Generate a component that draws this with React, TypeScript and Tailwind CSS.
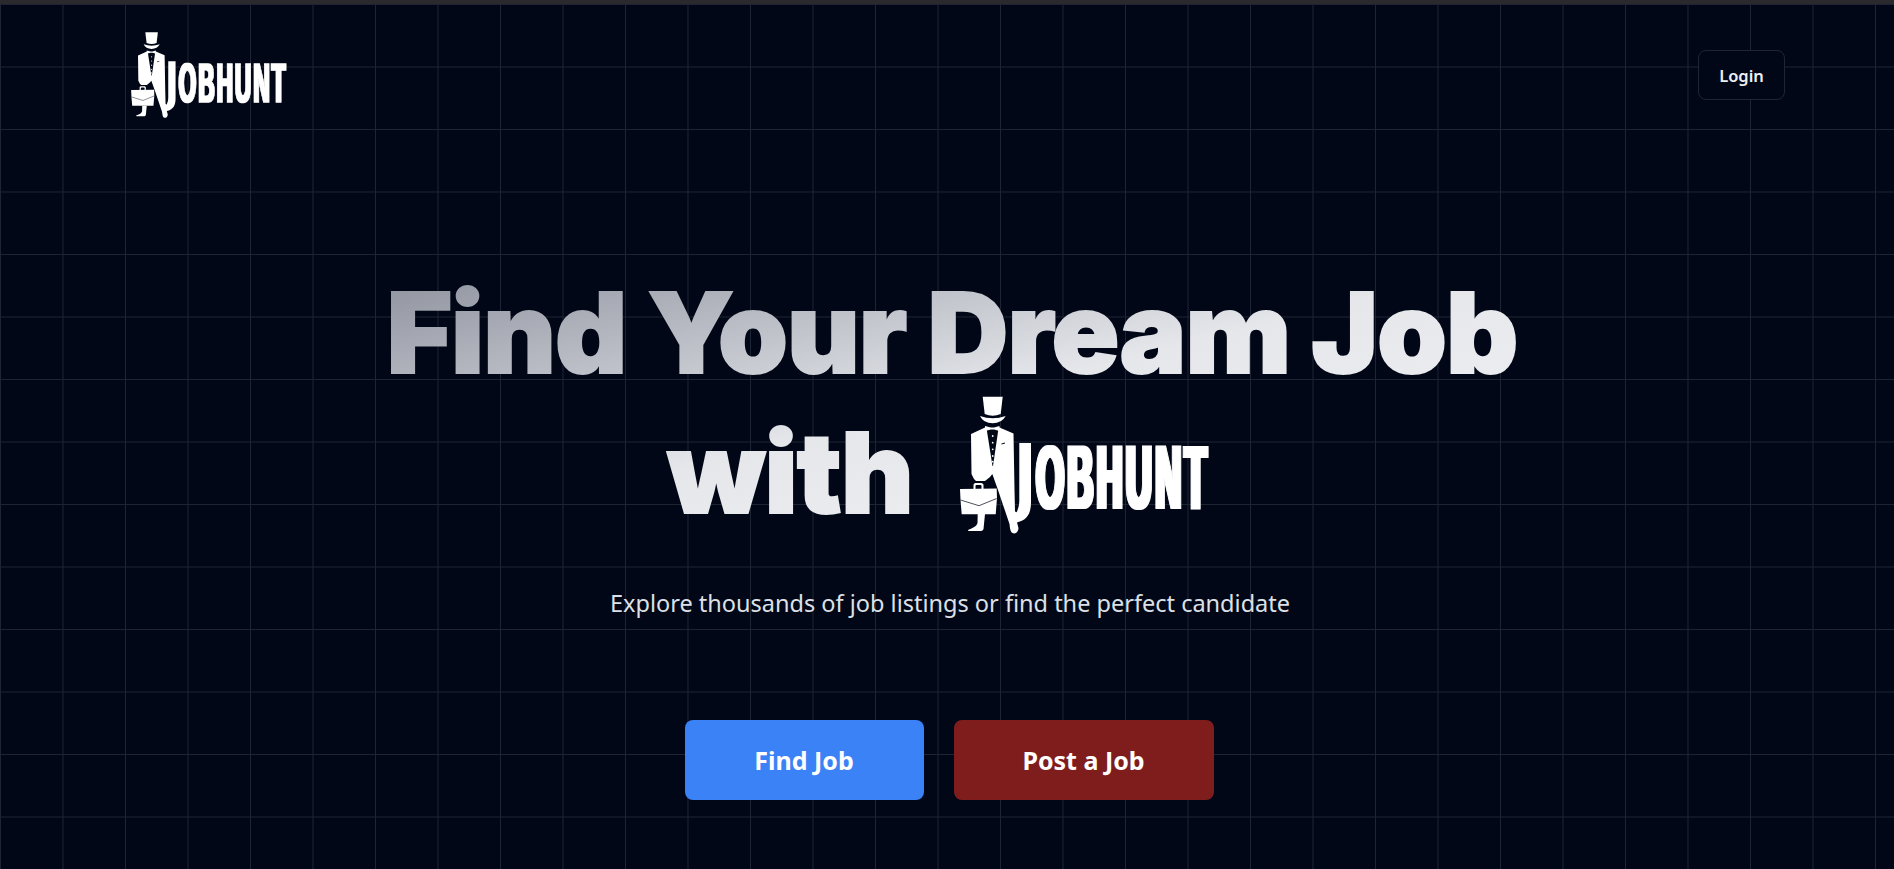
const Logo = ({ className }: { className: string }) => (
  <svg viewBox="0 0 262 150" className={className}>
    <defs>
      {/* the wordmark has much heavier stems than a squeezed bold face */}
      <filter id="logo-stems" x="-5%" y="-5%" width="110%" height="110%">
        <feMorphology operator="dilate" radius="2 0" />
      </filter>
    </defs>
    {/* hat */}
    <path fill="#fff" d="M27.7 6.7H47.7L45.7 24Q37.7 27.3 29.7 24Z" />
    <path fill="#fff" d="M25 26Q37.7 30.7 50.7 26 46.7 33.3 37.7 33.3 28.3 33.3 25 26Z" />
    {/* jacket, trouser leg and the tail of the J */}
    <path
      fill="#fff"
      d="M16 44 30 37.5H44.5L58.5 43.5 59.5 100 60 121C61 123 62 122.5 62.5 120 64 117 64.3 113 64.3 110V53H76V112C76 124 72 130 62 132.5L63.5 138C63.5 142 60 144.5 57.5 143 55.5 142 55 139 54.5 134L43 100 37.3 84 35 87 30 91H21L19 89 16.5 84Z"
    />
    {/* vest */}
    <path fill="#010717" d="M31 35H44L38 76H37.5Z" />
    <circle cx="37.7" cy="46" r="0.9" fill="#fff" />
    <circle cx="37.7" cy="52.7" r="0.9" fill="#fff" />
    <circle cx="37.7" cy="59.3" r="0.9" fill="#fff" />
    <circle cx="37.7" cy="66" r="0.9" fill="#fff" />
    <circle cx="37.7" cy="71.7" r="0.9" fill="#fff" />
    {/* bow tie */}
    <path fill="#fff" d="M30 36 36 37.5H39L44.5 36V41L39 39.5H36L30 41Z" />
    {/* breast pocket */}
    <path fill="#010717" d="M46.5 53.5 50 52.5V53.6L46.5 54.5Z" />
    {/* briefcase */}
    <path fill="#fff" d="M18.5 99V95C18.5 93.5 20 93 21 93H26C27.5 93 28.5 94 28.5 95V99H26.5V96C26.5 95.5 26 95 25.5 95H21.5C21 95 20.5 95.5 20.5 96V99Z" />
    <path fill="#fff" d="M5 99 41.7 98.5 42 108 40.7 124.3H6.7L5.5 110Z" />
    <path fill="none" stroke="#010717" strokeWidth="0.7" d="M5.5 110 24 115.7 41.7 108.5" />
    {/* left leg and shoe */}
    <path fill="#fff" d="M22.7 124H30L28.5 139C28 140.5 27 141 25 141H14C12.5 141 12.5 140 14 139.5 18 138 22 136 22.5 133Z" />
    <g filter="url(#logo-stems)">
      <g transform="translate(81.2 117.7) scale(0.4 1)">
        <text fontFamily="'Liberation Sans', sans-serif" fontWeight="700" fontSize="89" letterSpacing="9" fill="#fff" stroke="#fff" strokeWidth="2" strokeLinejoin="miter">
          OBHUNT
        </text>
      </g>
    </g>
  </svg>
);

export default function App() {
  return (
    <div className="h-[869px] w-full overflow-hidden bg-[#010717] font-['Noto_Sans',sans-serif] text-white">
      <div className="h-1 bg-[#2a2a2e]" />
      <div className="h-[865px] bg-[linear-gradient(to_right,#1d2433_1px,transparent_1px),linear-gradient(to_bottom,#1d2433_1px,transparent_1px)] bg-[size:62.5px_62.5px]">
        <header className="flex items-start justify-between pl-[128px] pr-[109px] pt-[24px]">
          <Logo className="h-[94px] w-[164px]" />
          <button className="mt-[22px] h-[50px] w-[87px] rounded-lg border border-[#1f2533] bg-[#010717] pt-[2px] text-[16.5px] font-semibold text-[#eef0f4]">
            Login
          </button>
        </header>
        <main className="flex flex-col items-center pl-[6px] pt-[140px]">
          <h1 className="ml-[4px] bg-gradient-to-br from-[#8b8f9b] via-[#e5e7eb] to-[#f3f4f6] bg-clip-text text-center font-['Inter',sans-serif] text-[112px] font-black leading-[140px] tracking-[-1px] text-transparent [-webkit-text-stroke:2px_transparent]">
            <span className="block">Find Your Dream Job</span>
            <span className="flex h-[140px] items-center justify-center gap-[42px] pr-[20px]">
              with
              <Logo className="mb-[14px] h-[150px] w-[262px]" />
            </span>
          </h1>
          <p className="mt-[45px] text-[23.5px] leading-8 text-[#dde0e6]">Explore thousands of job listings or find the perfect candidate</p>
          <div className="mt-[101px] flex gap-[30px] pr-[2px]">
            <button className="h-[80px] w-[239px] rounded-lg bg-[#3b82f6] pt-[2px] text-[25px] font-bold">Find Job</button>
            <button className="h-[80px] w-[260px] rounded-lg bg-[#7f1d1d] pt-[2px] text-[25px] font-bold">Post a Job</button>
          </div>
        </main>
      </div>
    </div>
  );
}
